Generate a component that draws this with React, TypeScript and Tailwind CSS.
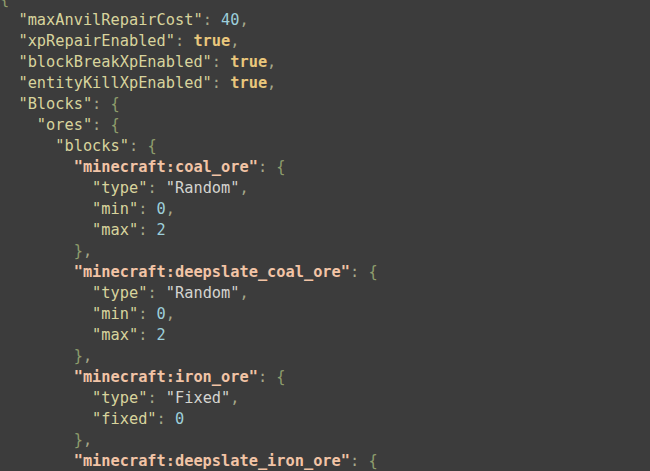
import React from "react";

type Tok = { t: string; c: string; b?: boolean };

const K = "text-[#d8d49c]"; // key
const BK = "text-[#f2c4a6]"; // bold key
const P = "text-[#a6a88a]"; // punctuation
const BR = "text-[#8e9d6c]"; // braces
const N = "text-[#9dcfdb]"; // number
const T = "text-[#e9c77c]"; // true
const S = "text-[#d4d4d0]"; // string

const key = (k: string, bold = false): Tok[] => [
  { t: `"${k}"`, c: bold ? BK : K, b: bold },
  { t: ": ", c: P },
];

const lines: { i: number; toks: Tok[] }[] = [
  { i: 0, toks: [{ t: "{", c: BR }] },
  { i: 1, toks: [...key("maxAnvilRepairCost"), { t: "40", c: N }, { t: ",", c: P }] },
  { i: 1, toks: [...key("xpRepairEnabled"), { t: "true", c: T, b: true }, { t: ",", c: P }] },
  { i: 1, toks: [...key("blockBreakXpEnabled"), { t: "true", c: T, b: true }, { t: ",", c: P }] },
  { i: 1, toks: [...key("entityKillXpEnabled"), { t: "true", c: T, b: true }, { t: ",", c: P }] },
  { i: 1, toks: [...key("Blocks"), { t: "{", c: BR }] },
  { i: 2, toks: [...key("ores"), { t: "{", c: BR }] },
  { i: 3, toks: [...key("blocks"), { t: "{", c: BR }] },
  { i: 4, toks: [...key("minecraft:coal_ore", true), { t: "{", c: BR }] },
  { i: 5, toks: [...key("type"), { t: '"Random"', c: S }, { t: ",", c: P }] },
  { i: 5, toks: [...key("min"), { t: "0", c: N }, { t: ",", c: P }] },
  { i: 5, toks: [...key("max"), { t: "2", c: N }] },
  { i: 4, toks: [{ t: "}", c: BR }, { t: ",", c: P }] },
  { i: 4, toks: [...key("minecraft:deepslate_coal_ore", true), { t: "{", c: BR }] },
  { i: 5, toks: [...key("type"), { t: '"Random"', c: S }, { t: ",", c: P }] },
  { i: 5, toks: [...key("min"), { t: "0", c: N }, { t: ",", c: P }] },
  { i: 5, toks: [...key("max"), { t: "2", c: N }] },
  { i: 4, toks: [{ t: "}", c: BR }, { t: ",", c: P }] },
  { i: 4, toks: [...key("minecraft:iron_ore", true), { t: "{", c: BR }] },
  { i: 5, toks: [...key("type"), { t: '"Fixed"', c: S }, { t: ",", c: P }] },
  { i: 5, toks: [...key("fixed"), { t: "0", c: N }] },
  { i: 4, toks: [{ t: "}", c: BR }, { t: ",", c: P }] },
  { i: 4, toks: [...key("minecraft:deepslate_iron_ore", true), { t: "{", c: BR }] },
];

export default function App() {
  return (
    <div className="w-[650px] h-[471px] overflow-hidden bg-[#3c3c3c]">
      <pre
        className="mt-[-11.5px] pl-0 text-[15.3px] leading-[21px] whitespace-pre"
        style={{ fontFamily: '"DejaVu Sans Mono", "Liberation Mono", monospace' }}
      >
        {lines.map((l, idx) => (
          <div key={idx}>
            {"  ".repeat(l.i)}
            {l.toks.map((tk, j) => (
              <span key={j} className={`${tk.c} ${tk.b ? "font-bold" : ""}`}>
                {tk.t}
              </span>
            ))}
          </div>
        ))}
      </pre>
    </div>
  );
}
